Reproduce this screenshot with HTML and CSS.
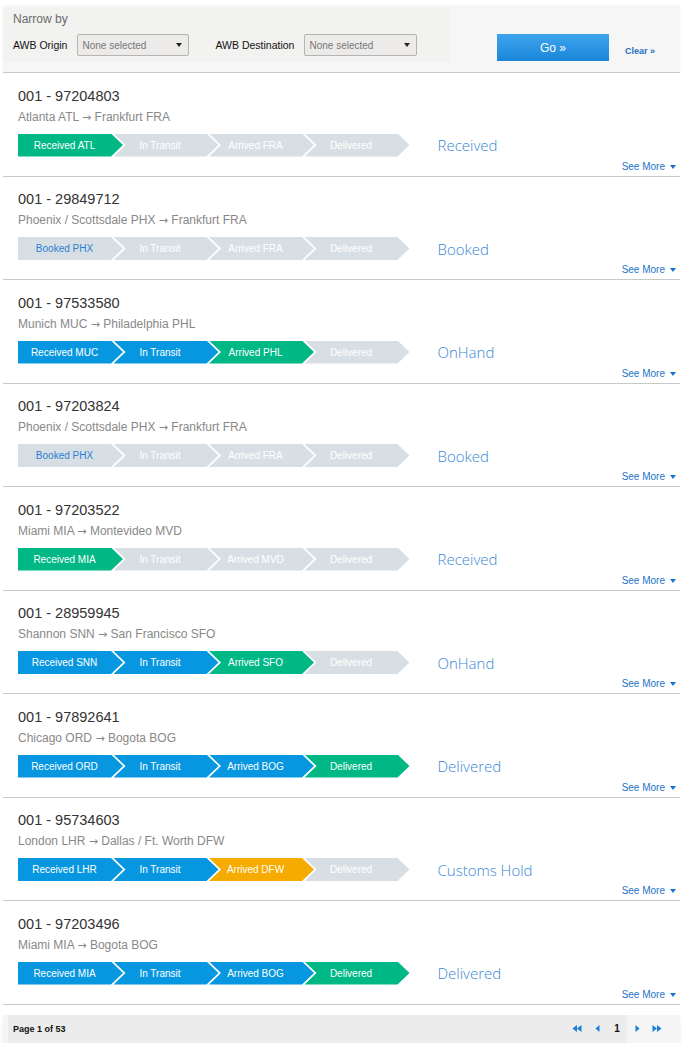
FILE: index.html
```html
<!DOCTYPE html>
<html>
<head>
<meta charset="utf-8">
<title>AWB Tracking</title>
<link rel="stylesheet" href="styles.css">
</head>
<body>
<div class="page">
  <div class="filters">
    <div class="narrow">
      <div class="narrow-title">Narrow by</div>
      <div class="filter-row">
        <span class="flabel">AWB Origin</span>
        <div class="select"><span>None selected</span><i class="caret"></i></div>
        <span class="flabel dest">AWB Destination</span>
        <div class="select sel2"><span>None selected</span><i class="caret"></i></div>
      </div>
    </div>
    <button class="go">Go »</button>
    <a class="clear">Clear »</a>
  </div>

  <ul class="list">
    <li class="item">
      <div class="awb">001 - 97204803</div>
      <div class="route">Atlanta ATL <span class="arr">→</span> Frankfurt FRA</div>
      <div class="track">
        <div class="steps">
          <span class="step green">Received ATL</span>
          <span class="step">In Transit</span>
          <span class="step">Arrived FRA</span>
          <span class="step">Delivered</span>
        </div>
        <div class="status">Received</div>
      </div>
      <div class="more"><a>See More</a><i class="down"></i></div>
    </li>
    <li class="item">
      <div class="awb">001 - 29849712</div>
      <div class="route">Phoenix / Scottsdale PHX <span class="arr">→</span> Frankfurt FRA</div>
      <div class="track">
        <div class="steps">
          <span class="step booked">Booked PHX</span>
          <span class="step">In Transit</span>
          <span class="step">Arrived FRA</span>
          <span class="step">Delivered</span>
        </div>
        <div class="status">Booked</div>
      </div>
      <div class="more"><a>See More</a><i class="down"></i></div>
    </li>
    <li class="item">
      <div class="awb">001 - 97533580</div>
      <div class="route">Munich MUC <span class="arr">→</span> Philadelphia PHL</div>
      <div class="track">
        <div class="steps">
          <span class="step blue">Received MUC</span>
          <span class="step blue">In Transit</span>
          <span class="step green">Arrived PHL</span>
          <span class="step">Delivered</span>
        </div>
        <div class="status">OnHand</div>
      </div>
      <div class="more"><a>See More</a><i class="down"></i></div>
    </li>
    <li class="item">
      <div class="awb">001 - 97203824</div>
      <div class="route">Phoenix / Scottsdale PHX <span class="arr">→</span> Frankfurt FRA</div>
      <div class="track">
        <div class="steps">
          <span class="step booked">Booked PHX</span>
          <span class="step">In Transit</span>
          <span class="step">Arrived FRA</span>
          <span class="step">Delivered</span>
        </div>
        <div class="status">Booked</div>
      </div>
      <div class="more"><a>See More</a><i class="down"></i></div>
    </li>
    <li class="item">
      <div class="awb">001 - 97203522</div>
      <div class="route">Miami MIA <span class="arr">→</span> Montevideo MVD</div>
      <div class="track">
        <div class="steps">
          <span class="step green">Received MIA</span>
          <span class="step">In Transit</span>
          <span class="step">Arrived MVD</span>
          <span class="step">Delivered</span>
        </div>
        <div class="status">Received</div>
      </div>
      <div class="more"><a>See More</a><i class="down"></i></div>
    </li>
    <li class="item">
      <div class="awb">001 - 28959945</div>
      <div class="route">Shannon SNN <span class="arr">→</span> San Francisco SFO</div>
      <div class="track">
        <div class="steps">
          <span class="step blue">Received SNN</span>
          <span class="step blue">In Transit</span>
          <span class="step green">Arrived SFO</span>
          <span class="step">Delivered</span>
        </div>
        <div class="status">OnHand</div>
      </div>
      <div class="more"><a>See More</a><i class="down"></i></div>
    </li>
    <li class="item">
      <div class="awb">001 - 97892641</div>
      <div class="route">Chicago ORD <span class="arr">→</span> Bogota BOG</div>
      <div class="track">
        <div class="steps">
          <span class="step blue">Received ORD</span>
          <span class="step blue">In Transit</span>
          <span class="step blue">Arrived BOG</span>
          <span class="step green">Delivered</span>
        </div>
        <div class="status">Delivered</div>
      </div>
      <div class="more"><a>See More</a><i class="down"></i></div>
    </li>
    <li class="item">
      <div class="awb">001 - 95734603</div>
      <div class="route">London LHR <span class="arr">→</span> Dallas / Ft. Worth DFW</div>
      <div class="track">
        <div class="steps">
          <span class="step blue">Received LHR</span>
          <span class="step blue">In Transit</span>
          <span class="step orange">Arrived DFW</span>
          <span class="step">Delivered</span>
        </div>
        <div class="status">Customs Hold</div>
      </div>
      <div class="more"><a>See More</a><i class="down"></i></div>
    </li>
    <li class="item">
      <div class="awb">001 - 97203496</div>
      <div class="route">Miami MIA <span class="arr">→</span> Bogota BOG</div>
      <div class="track">
        <div class="steps">
          <span class="step blue">Received MIA</span>
          <span class="step blue">In Transit</span>
          <span class="step blue">Arrived BOG</span>
          <span class="step green">Delivered</span>
        </div>
        <div class="status">Delivered</div>
      </div>
      <div class="more"><a>See More</a><i class="down"></i></div>
    </li>
  </ul>

  <div class="pager">
    <div class="page-info">Page 1 of 53</div>
    <div class="nav">
      <span class="nav-btn"><svg width="10" height="7" viewBox="0 0 10 7"><path d="M5 0 L0.5 3.5 L5 7 Z M9.5 0 L5 3.5 L9.5 7 Z" fill="#1a7fd6"/></svg></span>
      <span class="nav-btn"><svg width="5" height="7" viewBox="0 0 5 7"><path d="M4.5 0 L0.5 3.5 L4.5 7 Z" fill="#1a7fd6"/></svg></span>
      <span class="nav-btn num">1</span>
      <span class="nav-btn"><svg width="5" height="7" viewBox="0 0 5 7"><path d="M0.5 0 L4.5 3.5 L0.5 7 Z" fill="#1a7fd6"/></svg></span>
      <span class="nav-btn"><svg width="10" height="7" viewBox="0 0 10 7"><path d="M0.5 0 L5 3.5 L0.5 7 Z M5 0 L9.5 3.5 L5 7 Z" fill="#1a7fd6"/></svg></span>
    </div>
  </div>
</div>
</body>
</html>
```

FILE: styles.css
```css
html, body {
  margin: 0;
  padding: 0;
  background: #ffffff;
}

body {
  font-family: "Liberation Sans", Arial, sans-serif;
  color: #333;
}

.page {
  margin: 0 2px 0 3px;
  padding-top: 8px;
}

/* ---------- Filter bar ---------- */
.filters {
  display: flex;
  align-items: flex-start;
  height: 64px;
  background: #f6f6f6;
  border-bottom: 1px solid #c8c8c8;
  box-shadow: 0 -2px 3px rgba(0, 0, 0, 0.05);
}

.narrow {
  width: 447px;
  height: 54px;
  box-sizing: border-box;
  padding: 4px 10px 0;
  background: #f2f2f0;
}

.narrow-title {
  font-size: 12px;
  line-height: 14px;
  color: #6b6b6b;
}

.filter-row {
  display: flex;
  align-items: center;
  margin-top: 8px;
  height: 22px;
}

.flabel {
  font-size: 10.5px;
  color: #111;
  margin-right: 10px;
}

.flabel.dest {
  margin-left: 26px;
}

.select {
  width: 112px;
  height: 22px;
  box-sizing: border-box;
  display: flex;
  align-items: center;
  justify-content: space-between;
  padding: 0 6px 0 4px;
  border: 1px solid #b4b4b4;
  border-radius: 2px;
  background: #ecebe9;
  font-size: 10px;
  color: #777;
}

.sel2 {
  width: 113px;
}

.caret {
  width: 0;
  height: 0;
  border-top: 4px solid #222;
  border-left: 3px solid transparent;
  border-right: 3px solid transparent;
}

.go {
  margin: 26px 0 0 47px;
  width: 112px;
  height: 27px;
  border: none;
  padding: 0;
  background: linear-gradient(#3fa4ee, #1a86d9);
  color: #fff;
  font-family: "Liberation Sans", Arial, sans-serif;
  font-size: 12px;
}

.clear {
  margin: 37px 0 0 16px;
  font-size: 9px;
  font-weight: bold;
  color: #1b6fc6;
  line-height: 12px;
}

/* ---------- List ---------- */
.list {
  list-style: none;
  margin: 0;
  padding: 0;
}

.item {
  padding: 13.5px 0 3px 15px;
  border-bottom: 1px solid #c8c8c8;
}

.awb {
  font-size: 14.5px;
  line-height: 18px;
  height: 18px;
  color: #333;
}

.route {
  margin-top: 4px;
  height: 16px;
  font-size: 12px;
  line-height: 16px;
  color: #888;
}

.arr {
  font-family: "DejaVu Sans", sans-serif;
  font-size: 11px;
  line-height: 1;
}

.track {
  display: flex;
  align-items: center;
  margin-top: 9px;
  height: 23px;
}

.steps {
  display: flex;
  height: 23px;
}

.step {
  width: 105px;
  height: 23px;
  box-sizing: border-box;
  padding-right: 12px;
  margin-left: -9.5px;
  display: flex;
  align-items: center;
  justify-content: center;
  font-size: 10px;
  color: #fff;
  background: #d8dfe4;
  clip-path: polygon(0 0, 93px 0, 100% 50%, 93px 100%, 0 100%, 12px 50%);
}

.step:first-child {
  margin-left: 0;
  clip-path: polygon(0 0, 93px 0, 100% 50%, 93px 100%, 0 100%);
}

.step.green { background: #00b886; }
.step.blue { background: #0797e0; }
.step.orange { background: #f6ab00; }
.step.booked { color: #2a7fd4; }

.status {
  margin-left: 28px;
  font-family: "Open Sans", "Liberation Sans", sans-serif;
  font-weight: 300;
  font-size: 15px;
  line-height: 20px;
  color: #3a88d6;
}

.more {
  margin-top: 4px;
  height: 12px;
  display: flex;
  justify-content: flex-end;
  align-items: center;
  padding-right: 4px;
}

.more a {
  font-size: 10px;
  line-height: 12px;
  color: #1e72c6;
}

.down {
  margin-left: 5px;
  width: 0;
  height: 0;
  border-top: 4px solid #1e72c6;
  border-left: 3px solid transparent;
  border-right: 3px solid transparent;
}

/* ---------- Pager ---------- */
.pager {
  margin-top: 10px;
  height: 28px;
  display: flex;
  align-items: center;
  justify-content: space-between;
  background: linear-gradient(to right, #f5f5f5 5px, #ececec 5px, #ececec 624px, #f5f5f5 624px);
  box-shadow: 0 3px 4px rgba(0, 0, 0, 0.07);
}

.page-info {
  margin-left: 10px;
  font-size: 9px;
  font-weight: bold;
  color: #111;
}

.nav {
  display: flex;
  align-items: center;
  margin-right: 13px;
}

.nav-btn {
  width: 20px;
  display: flex;
  justify-content: center;
  align-items: center;
}

.nav-btn.num {
  font-size: 10px;
  font-weight: bold;
  color: #111;
}
```
